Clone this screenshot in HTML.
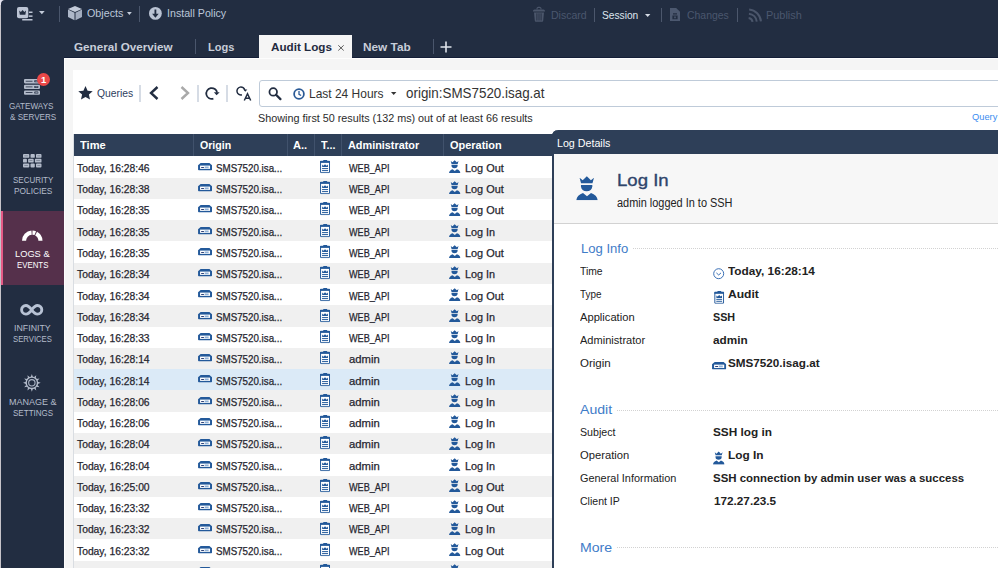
<!DOCTYPE html>
<html>
<head>
<meta charset="utf-8">
<title>SmartConsole - Audit Logs</title>
<style>
*{box-sizing:border-box;margin:0;padding:0}
html,body{width:998px;height:568px;overflow:hidden}
body{position:relative;background:#222d41;font-family:"Liberation Sans",sans-serif;color:#222;font-size:11px}
.abs{position:absolute}
.t{position:absolute;white-space:nowrap;line-height:1;transform-origin:0 0}
svg{position:absolute;overflow:visible}
#top{left:0;top:0;width:998px;height:58px;background:#222d41}
.vsep{position:absolute;width:1px;background:#4a566c}
#tabact{left:259px;top:35px;width:92.5px;height:24px;background:#f5f5f5}
#side{left:0;top:58px;width:64px;height:510px;background:#222d41}
#navact{left:1px;top:211px;width:63px;height:74px;background:#55304b;border-left:2px solid #e45a86}
#content{left:64px;top:58px;width:935px;height:510px;background:#f5f5f5}
#white{left:73px;top:70px;width:925px;height:498px;background:#fff}
#search{left:258.5px;top:79.5px;width:760px;height:27.5px;border:1px solid #bfcbd9;border-radius:3px;background:#fff}
#thead{left:73.8px;top:134.3px;width:479px;height:21.5px;background:#2e3f58}
.hsep{top:134.3px;width:1px;height:21.6px;background:#41526c}
.row{position:absolute;left:74px;width:478px;height:21.27px}
.row.alt{background:#f0f0f0}
.row.sel{background:#dbeaf7}
.c{position:absolute;line-height:1;white-space:nowrap;font-size:10.5px;color:#26262f;-webkit-text-stroke:.25px #26262f;transform-origin:0 0}
.ic{top:4px}
.icgw{left:123.9px;top:6.4px;width:14.1px;height:7.4px}
.icaud{left:246px;top:3.5px;width:10.1px;height:13.2px}
.icusr{left:374.5px;top:3.7px;width:11.5px;height:13px}
#dlg{left:552px;top:130px;width:460px;height:450px;background:#fff;border:0 solid #2e3f58;border-left-width:2px;border-top-left-radius:6px}
#dlgtitle{left:552px;top:130px;width:460px;height:24px;background:#2e3f58;border-top-left-radius:6px}
#dlghead{left:554px;top:154px;width:444px;height:70px;background:#f7f7f7;border-bottom:1px solid #d2d2d2}
.dots{position:absolute;height:1px;right:0;background:repeating-linear-gradient(90deg,#d2d2d2 0 1px,transparent 1px 2px)}

</style>
</head>
<body>
<svg width="0" height="0" style="position:absolute">
<defs>
<symbol id="i-gw" viewBox="0 0 14 7.4">
  <path d="M2.6 0h8.800l2.600 2.300v4.300a.8.800 0 0 1-.8.800H.8a.8.800 0 0 1-.8-.8V2.300z" fill="#23599a"/>
  <rect x="2" y="2.600" width="10" height="3.300" fill="#fff"/>
  <rect x="3.100" y="4" width="2.800" height=".9" fill="#1a2f6a"/>
  <rect x="6.600" y="3.500" width="4" height="1.700" fill="#8fb0d6"/>
</symbol>
<symbol id="i-aud" viewBox="0 0 10 13.200">
  <rect x="3.100" y="0" width="4.100" height="1.500" rx=".5" fill="#23599a"/>
  <rect x=".5" y="1.400" width="9" height="11.300" rx=".3" fill="#fff" stroke="#23599a" stroke-width="1"/>
  <rect x="0" y=".9" width="10" height="2" fill="#23599a"/>
  <path d="M2.100 4.600l1.300 1.100L5 4.200l1.600 1.500 1.300-1.100v2.500H2.100z" fill="#23599a"/>
  <rect x="2" y="8.100" width="6" height="1" fill="#23599a"/>
  <rect x="2" y="10.100" width="6" height="1" fill="#23599a"/>
</symbol>
<symbol id="i-usr" viewBox="0 0 23 26">
  <path d="M3.500 2l3.400 2.600L11.300.3l4.400 4.300L19 2l-1.600 5.800H5.100z" fill="#23599a"/>
  <path d="M5 9.700h12.200v1.400a6.100 5.400 0 0 1-12.200 0z" fill="#23599a"/>
  <path d="M0 26c.5-3.800 3-6.200 7.200-7.600l4.300 3.400 4.300-3.400c4.200 1.400 6.700 3.800 7.200 7.600z" fill="#23599a"/>
</symbol>
</defs>
</svg>
<div id="top" class="abs"></div>
<div id="side" class="abs"></div>
<div class="abs" style="left:0;top:0;width:1px;height:568px;background:#c6c3c9"></div>
<svg style="left:0;top:0;width:5px;height:5px" viewBox="0 0 5 5"><path d="M0 0h5A4 4 0 0 0 1 4.500V5H0z" fill="#e4e2ee"/></svg>

<!-- top toolbar -->
<svg style="left:17px;top:6.500px;width:16px;height:14px" viewBox="0 0 16 14">
  <rect x="0" y="0" width="11.300" height="11.200" rx="2" fill="#bcc4d4"/>
  <path d="M2.200 3.400l1.700 1.500 1.700-1.900 1.700 1.900 1.700-1.500-.6 4.400H2.800z" fill="#222d41"/>
  <rect x="11.900" y="4.500" width="3.600" height="1.500" fill="#bcc4d4"/>
  <rect x="11.900" y="8.400" width="3.600" height="1.500" fill="#bcc4d4"/>
  <rect x="5.200" y="12" width="10.300" height="1.500" fill="#bcc4d4"/>
</svg>
<svg style="left:39.1px;top:10.8px;width:5.7px;height:3.3px" viewBox="0 0 5.7 3.3"><path d="M0 0h5.7L2.85 3.3z" fill="#c3cbd9"/></svg>
<div class="vsep" style="left:59px;top:6px;height:16px"></div>
<svg style="left:68.200px;top:6.300px;width:14px;height:14.200px" viewBox="0 0 14 14.200">
  <path d="M7 0L14 2.900 7 6.100 0 2.900z" fill="#c3cbd9"/>
  <path d="M0 3.600l6.500 3.100v7.500L0 11.100z" fill="#aeb8c9"/>
  <path d="M14 3.600L7.500 6.700v7.500l6.500-3.100z" fill="#a3adbf"/>
</svg>
<svg style="left:126.7px;top:11.9px;width:4.8px;height:3px" viewBox="0 0 4.8 3"><path d="M0 0h4.8L2.4 3z" fill="#c3cbd9"/></svg>
<div class="vsep" style="left:139px;top:6px;height:16px"></div>
<svg style="left:149px;top:6.700px;width:12.800px;height:12.800px" viewBox="0 0 12.800 12.800">
  <circle cx="6.400" cy="6.400" r="6.400" fill="#bac3d3"/>
  <path d="M5.500 2.500h1.800v4.300h2.400L6.400 10.800 3.100 6.800h2.400z" fill="#222d41"/>
</svg>

<svg style="left:532.900px;top:7.200px;width:12px;height:14.800px" viewBox="0 0 12 14.800">
  <path d="M4 2.600V1.700A1.300 1.300 0 0 1 5.300.4h1.400A1.300 1.300 0 0 1 8 1.700v.9" fill="none" stroke="#4b566b" stroke-width="1.100"/>
  <path d="M0 4.100A1.500 1.500 0 0 1 1.500 2.600h9A1.500 1.500 0 0 1 12 4.100v.5H0z" fill="#4b566b"/>
  <path d="M1 5.400h10l-.8 8.400a1 1 0 0 1-1 .9H2.800a1 1 0 0 1-1-.9z" fill="#4b566b"/>
  <path d="M3.900 6.300v7.200M6 6.300v7.200M8.100 6.300v7.200" stroke="#222d41" stroke-width=".9"/>
</svg>
<div class="vsep" style="left:594px;top:8px;height:14px;background:#4c576c"></div>
<svg style="left:645.3px;top:13.5px;width:5.4px;height:3px" viewBox="0 0 5.4 3"><path d="M0 0h5.4L2.7 3z" fill="#d5dbe5"/></svg>
<div class="vsep" style="left:661px;top:8px;height:14px;background:#4c576c"></div>
<svg style="left:670px;top:8px;width:10px;height:13px" viewBox="0 0 10 13">
  <path d="M0 0h6.2L10 3.8V13H0z" fill="#4c586f"/>
  <path d="M3 5.2h4v1.2H3zM2.4 7.6h5.2v3.6H2.4z" fill="#222d41"/>
  <path d="M4.2 8.6h1.6v1.6H4.2z" fill="#4c586f"/>
</svg>
<div class="vsep" style="left:737px;top:8px;height:14px;background:#4c576c"></div>
<svg style="left:747.200px;top:8.400px;width:15px;height:15px" viewBox="0 0 15 15">
  <path d="M1.64 9.94A4.6 4.6 0 0 1 5.56 13.86M1.92 5.75A8.8 8.8 0 0 1 9.75 13.58M2.13 1.55A13 13 0 0 1 13.95 13.37" fill="none" stroke="#4b566b" stroke-width="2"/>
</svg>

<!-- tabs -->
<div class="vsep" style="left:195px;top:39px;height:15px"></div>
<div id="tabact" class="abs"></div>
<svg style="left:338.300px;top:45.300px;width:6px;height:5.800px" viewBox="0 0 6 5.800"><path d="M.3.300l5.400 5.200M5.700.3L.3 5.500" stroke="#4a4a4a" stroke-width=".9"/></svg>
<div class="vsep" style="left:433px;top:39px;height:15px"></div>
<svg style="left:440px;top:41px;width:12px;height:12px" viewBox="0 0 12 12"><path d="M6 0.5v11M0.5 6h11" stroke="#dfe3ea" stroke-width="1.6"/></svg>

<!-- sidebar -->
<div id="navact" class="abs"></div>
<svg style="left:24px;top:79.400px;width:16px;height:15.800px" viewBox="0 0 16 15.800">
  <g fill="#b4bccb"><rect x="0" y="0" width="16" height="4.400" rx="1.100"/><rect x="0" y="5.700" width="16" height="4.400" rx="1.100"/><rect x="0" y="11.400" width="16" height="4.400" rx="1.100"/></g>
  <g fill="#222d41"><rect x="1.700" y="1.800" width="6.800" height=".8"/><rect x="1.700" y="7.500" width="6.800" height=".8"/><rect x="1.700" y="13.200" width="6.800" height=".8"/>
  <rect x="10.300" y="1.200" width="4" height="2" rx=".4"/><rect x="10.300" y="6.900" width="4" height="2" rx=".4"/><rect x="10.300" y="12.600" width="4" height="2" rx=".4"/></g>
  <g fill="#8d97aa"><rect x="11.300" y="1.700" width="2.400" height="1"/><rect x="11.300" y="7.400" width="2.400" height="1"/><rect x="11.300" y="13.100" width="2.400" height="1"/></g>
</svg>
<div class="abs" style="left:37.200px;top:73px;width:13px;height:13px;border-radius:6.500px;background:#ea4848"></div>
<span class="t" style="left:41.100px;top:75px;color:#fff;font-size:9.500px;font-weight:bold">1</span>

<svg style="left:22.700px;top:154.300px;width:18.500px;height:13.400px" viewBox="0 0 18.500 13.400">
  <g fill="#b4bccb">
  <rect x="0" y="0" width="6.300" height="3.800" rx=".9"/><rect x="7.500" y="0" width="4.300" height="3.800" rx=".9"/><rect x="13" y="0" width="5.500" height="3.800" rx=".9"/>
  <rect x="0" y="4.800" width="3.900" height="3.800" rx=".9"/><rect x="5.100" y="4.800" width="5.600" height="3.800" rx=".9"/><rect x="11.900" y="4.800" width="6.600" height="3.800" rx=".9"/>
  <rect x="0" y="9.600" width="6.300" height="3.800" rx=".9"/><rect x="7.500" y="9.600" width="4.300" height="3.800" rx=".9"/><rect x="13" y="9.600" width="5.500" height="3.800" rx=".9"/>
  </g>
  <g fill="#222d41" opacity=".55"><rect x="1.300" y="1.600" width="3.600" height=".6"/><rect x="14.300" y="1.600" width="3" height=".6"/><rect x="6.400" y="6.400" width="3" height=".6"/><rect x="13.200" y="6.400" width="4" height=".6"/><rect x="1.300" y="11.200" width="3.600" height=".6"/><rect x="14.300" y="11.200" width="3" height=".6"/></g>
</svg>

<svg style="left:21.700px;top:230.100px;width:20.500px;height:10.800px" viewBox="0 0 20.500 10.800">
  <path d="M2.050 10.800A8.200 8.200 0 0 1 18.450 10.800" fill="none" stroke="#fff" stroke-width="4.100" stroke-dasharray="12.100 .9 2.900 .9 9.200"/>
</svg>

<svg style="left:19.900px;top:304.100px;width:23.400px;height:11.600px" viewBox="0 0 23.400 11.600">
  <path d="M11.700 5.800C9.400 2.700 7.900 1.500 5.900 1.500a4.300 4.300 0 0 0 0 8.600C7.900 10.100 9.400 8.900 11.700 5.800S15.500 1.500 17.500 1.500a4.300 4.300 0 0 1 0 8.600C15.500 10.100 14 8.900 11.700 5.800z" fill="none" stroke="#b8c2d4" stroke-width="2.900" stroke-linejoin="round"/>
</svg>

<svg style="left:22.700px;top:374.200px;width:17.700px;height:17.700px" viewBox="0 0 17.700 17.700">
  <path d="M7.81 2.94L8.85 0.00L9.89 2.94zM10.90 3.21L13.28 1.19L12.71 4.25zM13.45 4.99L16.51 4.43L14.49 6.80zM14.76 7.81L17.70 8.85L14.76 9.89zM14.49 10.90L16.51 13.27L13.45 12.71zM12.71 13.45L13.28 16.51L10.90 14.49zM9.89 14.76L8.85 17.70L7.81 14.76zM6.80 14.49L4.43 16.51L4.99 13.45zM4.25 12.71L1.19 13.27L3.21 10.90zM2.94 9.89L0.00 8.85L2.94 7.81zM3.21 6.80L1.19 4.42L4.25 4.99zM4.99 4.25L4.42 1.19L6.80 3.21z" fill="#b4bccb"/>
  <circle cx="8.850" cy="8.850" r="5.700" fill="none" stroke="#b4bccb" stroke-width="1.400"/>
  <circle cx="8.850" cy="8.850" r="3.200" fill="none" stroke="#aab3c4" stroke-width="1.100"/>
</svg>

<!-- content -->
<div id="content" class="abs"></div>
<div class="abs" style="left:64px;top:57px;width:195px;height:1px;background:#141e37"></div>
<div class="abs" style="left:352px;top:57px;width:646px;height:1px;background:#141e37"></div>
<div class="abs" style="left:64px;top:58px;width:934px;height:1px;background:#fdfdfd"></div>
<div class="abs" style="left:64px;top:58px;width:1px;height:510px;background:#fdfdfd"></div>
<div id="white" class="abs"></div>

<div class="abs" style="left:73px;top:134px;width:1px;height:434px;background:#d9dde2"></div>
<!-- query bar -->
<svg style="left:78px;top:86px;width:15px;height:14px" viewBox="0 0 15 14"><path d="M7.5 0l2.100 4.700 5.100.500-3.800 3.400 1.100 5-4.500-2.600L3 13.600l1.100-5L0.300 5.200l5.100-.5z" fill="#222d41"/></svg>
<div class="abs" style="left:139px;top:85px;width:2px;height:16.500px;background:#d6dce5"></div>
<svg style="left:149px;top:86px;width:10px;height:14px" viewBox="0 0 10 14"><path d="M8.500 1L2 7l6.500 6" fill="none" stroke="#222d41" stroke-width="2.400"/></svg>
<svg style="left:180px;top:86px;width:10px;height:14px" viewBox="0 0 10 14"><path d="M1.500 1L8 7l-6.500 6" fill="none" stroke="#a9a9a9" stroke-width="2.400"/></svg>
<div class="abs" style="left:197px;top:85px;width:2px;height:16.500px;background:#d6dce5"></div>
<svg style="left:205.300px;top:86.800px;width:15px;height:13px" viewBox="0 0 15 13">
  <path d="M8.38 11.68A5.45 5.45 0 1 1 12.10 5.74" fill="none" stroke="#222d41" stroke-width="1.750"/>
  <path d="M8.900 5.300h5.800l-3.100 3z" fill="#222d41"/>
</svg>
<div class="abs" style="left:226px;top:85px;width:2px;height:16.500px;background:#d6dce5"></div>
<svg style="left:235.500px;top:86px;width:15.500px;height:14.600px" viewBox="0 0 15.500 14.600">
  <path d="M5.92 8.82A3.95 3.95 0 1 1 8.79 4.31" fill="none" stroke="#222d41" stroke-width="1.500"/>
  <path d="M7.500 3.400h3.800l-2 2.300z" fill="#222d41"/>
  <path d="M8.300 14.500l3.200-6.700 3.200 6.700M9.500 12.300h4" fill="none" stroke="#222d41" stroke-width="1.500"/>
</svg>
<div id="search" class="abs"></div>
<svg style="left:267.500px;top:86.700px;width:13.800px;height:13.200px" viewBox="0 0 15 15">
  <circle cx="5.600" cy="5.600" r="4.300" fill="none" stroke="#222d41" stroke-width="2"/>
  <path d="M8.800 8.800l5 5" stroke="#222d41" stroke-width="2.600" stroke-linecap="round"/>
</svg>
<svg style="left:292.600px;top:88.200px;width:12px;height:12px" viewBox="0 0 13 13">
  <circle cx="6.500" cy="6.500" r="5.300" fill="none" stroke="#2b5a96" stroke-width="1.900"/>
  <path d="M6.500 3.300v3.500l2.300 1.300" fill="none" stroke="#2b5a96" stroke-width="1.400"/>
</svg>
<svg style="left:390.9px;top:91.5px;width:5.4px;height:3px" viewBox="0 0 5.4 3"><path d="M0 0h5.4L2.7 3z" fill="#333"/></svg>

<!-- table header -->
<div id="thead" class="abs"></div>
<div class="abs hsep" style="left:193px"></div>
<div class="abs hsep" style="left:287px"></div>
<div class="abs hsep" style="left:314px"></div>
<div class="abs hsep" style="left:341px"></div>
<div class="abs hsep" style="left:443px"></div>
<!-- table rows -->
<div class="row" style="top:156.4px"><span class="c" style="left:2.8px;top:6.6px;transform:scaleX(0.9817)">Today, 16:28:46</span><svg class="ic icgw"><use href="#i-gw"/></svg><span class="c" style="left:141.7px;top:6.6px;transform:scaleX(0.9297)">SMS7520.isa...</span><svg class="ic icaud"><use href="#i-aud"/></svg><span class="c" style="left:274.9px;top:6.6px;transform:scaleX(0.8675)">WEB_API</span><svg class="ic icusr"><use href="#i-usr"/></svg><span class="c" style="left:391.3px;top:6.6px;transform:scaleX(1.0381)">Log Out</span></div>
<div class="row alt" style="top:177.7px"><span class="c" style="left:2.8px;top:6.3px;transform:scaleX(0.9817)">Today, 16:28:38</span><svg class="ic icgw"><use href="#i-gw"/></svg><span class="c" style="left:141.7px;top:6.3px;transform:scaleX(0.9297)">SMS7520.isa...</span><svg class="ic icaud"><use href="#i-aud"/></svg><span class="c" style="left:274.9px;top:6.3px;transform:scaleX(0.8675)">WEB_API</span><svg class="ic icusr"><use href="#i-usr"/></svg><span class="c" style="left:391.3px;top:6.3px;transform:scaleX(1.0381)">Log Out</span></div>
<div class="row" style="top:198.9px"><span class="c" style="left:2.8px;top:6.1px;transform:scaleX(0.9817)">Today, 16:28:35</span><svg class="ic icgw"><use href="#i-gw"/></svg><span class="c" style="left:141.7px;top:6.1px;transform:scaleX(0.9297)">SMS7520.isa...</span><svg class="ic icaud"><use href="#i-aud"/></svg><span class="c" style="left:274.9px;top:6.1px;transform:scaleX(0.8675)">WEB_API</span><svg class="ic icusr"><use href="#i-usr"/></svg><span class="c" style="left:391.3px;top:6.1px;transform:scaleX(1.0381)">Log Out</span></div>
<div class="row alt" style="top:220.2px"><span class="c" style="left:2.8px;top:6.8px;transform:scaleX(0.9817)">Today, 16:28:35</span><svg class="ic icgw"><use href="#i-gw"/></svg><span class="c" style="left:141.7px;top:6.8px;transform:scaleX(0.9297)">SMS7520.isa...</span><svg class="ic icaud"><use href="#i-aud"/></svg><span class="c" style="left:274.9px;top:6.8px;transform:scaleX(0.8675)">WEB_API</span><svg class="ic icusr"><use href="#i-usr"/></svg><span class="c" style="left:391.3px;top:6.8px;transform:scaleX(1.0307)">Log In</span></div>
<div class="row" style="top:241.5px"><span class="c" style="left:2.8px;top:6.5px;transform:scaleX(0.9817)">Today, 16:28:35</span><svg class="ic icgw"><use href="#i-gw"/></svg><span class="c" style="left:141.7px;top:6.5px;transform:scaleX(0.9297)">SMS7520.isa...</span><svg class="ic icaud"><use href="#i-aud"/></svg><span class="c" style="left:274.9px;top:6.5px;transform:scaleX(0.8675)">WEB_API</span><svg class="ic icusr"><use href="#i-usr"/></svg><span class="c" style="left:391.3px;top:6.5px;transform:scaleX(1.0381)">Log Out</span></div>
<div class="row alt" style="top:262.8px"><span class="c" style="left:2.8px;top:6.2px;transform:scaleX(0.9817)">Today, 16:28:34</span><svg class="ic icgw"><use href="#i-gw"/></svg><span class="c" style="left:141.7px;top:6.2px;transform:scaleX(0.9297)">SMS7520.isa...</span><svg class="ic icaud"><use href="#i-aud"/></svg><span class="c" style="left:274.9px;top:6.2px;transform:scaleX(0.8675)">WEB_API</span><svg class="ic icusr"><use href="#i-usr"/></svg><span class="c" style="left:391.3px;top:6.2px;transform:scaleX(1.0307)">Log In</span></div>
<div class="row" style="top:284.0px"><span class="c" style="left:2.8px;top:7.0px;transform:scaleX(0.9817)">Today, 16:28:34</span><svg class="ic icgw"><use href="#i-gw"/></svg><span class="c" style="left:141.7px;top:7.0px;transform:scaleX(0.9297)">SMS7520.isa...</span><svg class="ic icaud"><use href="#i-aud"/></svg><span class="c" style="left:274.9px;top:7.0px;transform:scaleX(0.8675)">WEB_API</span><svg class="ic icusr"><use href="#i-usr"/></svg><span class="c" style="left:391.3px;top:7.0px;transform:scaleX(1.0381)">Log Out</span></div>
<div class="row alt" style="top:305.3px"><span class="c" style="left:2.8px;top:6.7px;transform:scaleX(0.9817)">Today, 16:28:34</span><svg class="ic icgw"><use href="#i-gw"/></svg><span class="c" style="left:141.7px;top:6.7px;transform:scaleX(0.9297)">SMS7520.isa...</span><svg class="ic icaud"><use href="#i-aud"/></svg><span class="c" style="left:274.9px;top:6.7px;transform:scaleX(0.8675)">WEB_API</span><svg class="ic icusr"><use href="#i-usr"/></svg><span class="c" style="left:391.3px;top:6.7px;transform:scaleX(1.0307)">Log In</span></div>
<div class="row" style="top:326.6px"><span class="c" style="left:2.8px;top:6.4px;transform:scaleX(0.9817)">Today, 16:28:33</span><svg class="ic icgw"><use href="#i-gw"/></svg><span class="c" style="left:141.7px;top:6.4px;transform:scaleX(0.9297)">SMS7520.isa...</span><svg class="ic icaud"><use href="#i-aud"/></svg><span class="c" style="left:274.9px;top:6.4px;transform:scaleX(0.8675)">WEB_API</span><svg class="ic icusr"><use href="#i-usr"/></svg><span class="c" style="left:391.3px;top:6.4px;transform:scaleX(1.0307)">Log In</span></div>
<div class="row alt" style="top:347.8px"><span class="c" style="left:2.8px;top:6.2px;transform:scaleX(0.9817)">Today, 16:28:14</span><svg class="ic icgw"><use href="#i-gw"/></svg><span class="c" style="left:141.7px;top:6.2px;transform:scaleX(0.9297)">SMS7520.isa...</span><svg class="ic icaud"><use href="#i-aud"/></svg><span class="c" style="left:274.9px;top:6.2px;transform:scaleX(1.0731)">admin</span><svg class="ic icusr"><use href="#i-usr"/></svg><span class="c" style="left:391.3px;top:6.2px;transform:scaleX(1.0307)">Log In</span></div>
<div class="row sel" style="top:369.1px"><span class="c" style="left:2.8px;top:6.9px;transform:scaleX(0.9817)">Today, 16:28:14</span><svg class="ic icgw"><use href="#i-gw"/></svg><span class="c" style="left:141.7px;top:6.9px;transform:scaleX(0.9297)">SMS7520.isa...</span><svg class="ic icaud"><use href="#i-aud"/></svg><span class="c" style="left:274.9px;top:6.9px;transform:scaleX(1.0731)">admin</span><svg class="ic icusr"><use href="#i-usr"/></svg><span class="c" style="left:391.3px;top:6.9px;transform:scaleX(1.0307)">Log In</span></div>
<div class="row alt" style="top:390.4px"><span class="c" style="left:2.8px;top:6.6px;transform:scaleX(0.9817)">Today, 16:28:06</span><svg class="ic icgw"><use href="#i-gw"/></svg><span class="c" style="left:141.7px;top:6.6px;transform:scaleX(0.9297)">SMS7520.isa...</span><svg class="ic icaud"><use href="#i-aud"/></svg><span class="c" style="left:274.9px;top:6.6px;transform:scaleX(1.0731)">admin</span><svg class="ic icusr"><use href="#i-usr"/></svg><span class="c" style="left:391.3px;top:6.6px;transform:scaleX(1.0307)">Log In</span></div>
<div class="row" style="top:411.6px"><span class="c" style="left:2.8px;top:6.4px;transform:scaleX(0.9817)">Today, 16:28:06</span><svg class="ic icgw"><use href="#i-gw"/></svg><span class="c" style="left:141.7px;top:6.4px;transform:scaleX(0.9297)">SMS7520.isa...</span><svg class="ic icaud"><use href="#i-aud"/></svg><span class="c" style="left:274.9px;top:6.4px;transform:scaleX(1.0731)">admin</span><svg class="ic icusr"><use href="#i-usr"/></svg><span class="c" style="left:391.3px;top:6.4px;transform:scaleX(1.0307)">Log In</span></div>
<div class="row alt" style="top:432.9px"><span class="c" style="left:2.8px;top:6.1px;transform:scaleX(0.9817)">Today, 16:28:04</span><svg class="ic icgw"><use href="#i-gw"/></svg><span class="c" style="left:141.7px;top:6.1px;transform:scaleX(0.9297)">SMS7520.isa...</span><svg class="ic icaud"><use href="#i-aud"/></svg><span class="c" style="left:274.9px;top:6.1px;transform:scaleX(1.0731)">admin</span><svg class="ic icusr"><use href="#i-usr"/></svg><span class="c" style="left:391.3px;top:6.1px;transform:scaleX(1.0307)">Log In</span></div>
<div class="row" style="top:454.2px"><span class="c" style="left:2.8px;top:6.8px;transform:scaleX(0.9817)">Today, 16:28:04</span><svg class="ic icgw"><use href="#i-gw"/></svg><span class="c" style="left:141.7px;top:6.8px;transform:scaleX(0.9297)">SMS7520.isa...</span><svg class="ic icaud"><use href="#i-aud"/></svg><span class="c" style="left:274.9px;top:6.8px;transform:scaleX(1.0731)">admin</span><svg class="ic icusr"><use href="#i-usr"/></svg><span class="c" style="left:391.3px;top:6.8px;transform:scaleX(1.0307)">Log In</span></div>
<div class="row alt" style="top:475.5px"><span class="c" style="left:2.8px;top:6.5px;transform:scaleX(0.9817)">Today, 16:25:00</span><svg class="ic icgw"><use href="#i-gw"/></svg><span class="c" style="left:141.7px;top:6.5px;transform:scaleX(0.9297)">SMS7520.isa...</span><svg class="ic icaud"><use href="#i-aud"/></svg><span class="c" style="left:274.9px;top:6.5px;transform:scaleX(0.8675)">WEB_API</span><svg class="ic icusr"><use href="#i-usr"/></svg><span class="c" style="left:391.3px;top:6.5px;transform:scaleX(1.0381)">Log Out</span></div>
<div class="row" style="top:496.7px"><span class="c" style="left:2.8px;top:6.3px;transform:scaleX(0.9817)">Today, 16:23:32</span><svg class="ic icgw"><use href="#i-gw"/></svg><span class="c" style="left:141.7px;top:6.3px;transform:scaleX(0.9297)">SMS7520.isa...</span><svg class="ic icaud"><use href="#i-aud"/></svg><span class="c" style="left:274.9px;top:6.3px;transform:scaleX(0.8675)">WEB_API</span><svg class="ic icusr"><use href="#i-usr"/></svg><span class="c" style="left:391.3px;top:6.3px;transform:scaleX(1.0381)">Log Out</span></div>
<div class="row alt" style="top:518.0px"><span class="c" style="left:2.8px;top:6.0px;transform:scaleX(0.9817)">Today, 16:23:32</span><svg class="ic icgw"><use href="#i-gw"/></svg><span class="c" style="left:141.7px;top:6.0px;transform:scaleX(0.9297)">SMS7520.isa...</span><svg class="ic icaud"><use href="#i-aud"/></svg><span class="c" style="left:274.9px;top:6.0px;transform:scaleX(0.8675)">WEB_API</span><svg class="ic icusr"><use href="#i-usr"/></svg><span class="c" style="left:391.3px;top:6.0px;transform:scaleX(1.0307)">Log In</span></div>
<div class="row" style="top:539.3px"><span class="c" style="left:2.8px;top:6.7px;transform:scaleX(0.9817)">Today, 16:23:32</span><svg class="ic icgw"><use href="#i-gw"/></svg><span class="c" style="left:141.7px;top:6.7px;transform:scaleX(0.9297)">SMS7520.isa...</span><svg class="ic icaud"><use href="#i-aud"/></svg><span class="c" style="left:274.9px;top:6.7px;transform:scaleX(0.8675)">WEB_API</span><svg class="ic icusr"><use href="#i-usr"/></svg><span class="c" style="left:391.3px;top:6.7px;transform:scaleX(1.0381)">Log Out</span></div>
<div class="row alt" style="top:560.5px"><span class="c" style="left:2.8px;top:6.5px;transform:scaleX(0.9817)">Today, 16:23:31</span><svg class="ic icgw"><use href="#i-gw"/></svg><span class="c" style="left:141.7px;top:6.5px;transform:scaleX(0.9297)">SMS7520.isa...</span><svg class="ic icaud"><use href="#i-aud"/></svg><span class="c" style="left:274.9px;top:6.5px;transform:scaleX(0.8675)">WEB_API</span><svg class="ic icusr"><use href="#i-usr"/></svg><span class="c" style="left:391.3px;top:6.5px;transform:scaleX(1.0307)">Log In</span></div>
<!-- log details -->
<div id="dlg" class="abs"></div>
<div id="dlgtitle" class="abs"></div>
<div id="dlghead" class="abs"></div>
<svg style="left:576.3px;top:175.8px;width:22px;height:24.2px"><use href="#i-usr"/></svg>

<div class="dots" style="left:633.3px;top:248px"></div>
<svg style="left:712.8px;top:268.4px;width:11.4px;height:11.4px" viewBox="0 0 11.400 11.400"><circle cx="5.700" cy="5.700" r="5" fill="#fff" stroke="#3a6fb5" stroke-width="1"/><path d="M3.400 4.900l2.300 2.100 2.300-2.100" fill="none" stroke="#3a6fb5" stroke-width="1"/></svg>
<svg style="left:713.8px;top:290.5px;width:10.4px;height:12.8px"><use href="#i-aud"/></svg>
<svg style="left:712px;top:362.2px;width:14.3px;height:7.500px"><use href="#i-gw"/></svg>

<div class="dots" style="left:617.2px;top:410px"></div>
<svg style="left:712.8px;top:450.7px;width:11.6px;height:13.8px"><use href="#i-usr"/></svg>

<div class="dots" style="left:617.2px;top:547.2px"></div>
<!-- texts -->
<span class="t" id="t-obj" style="left:86.8px;top:8px;font-size:11.3px;color:#bcc7d9;transform:scaleX(0.9501)">Objects</span>
<span class="t" id="t-inst" style="left:167.0px;top:8px;font-size:11.3px;color:#bcc7d9;transform:scaleX(0.9427)">Install Policy</span>
<span class="t" id="t-disc" style="left:551.0px;top:10px;font-size:10.6px;color:#4b576e;transform:scaleX(0.9938)">Discard</span>
<span class="t" id="t-sess" style="left:602.1px;top:10px;font-size:10.6px;color:#dfe5ee;transform:scaleX(0.9628)">Session</span>
<span class="t" id="t-chg" style="left:687.1px;top:10px;font-size:10.6px;color:#4b576e;transform:scaleX(0.9857)">Changes</span>
<span class="t" id="t-pub" style="left:766.4px;top:10px;font-size:10.6px;color:#4b576e;transform:scaleX(1.0302)">Publish</span>
<span class="t" id="t-go" style="left:74.0px;top:42px;font-size:11.5px;color:#c8ced9;font-weight:bold;transform:scaleX(1.0147)">General Overview</span>
<span class="t" id="t-logs" style="left:207.8px;top:42px;font-size:11.5px;color:#c8ced9;font-weight:bold;transform:scaleX(0.9605)">Logs</span>
<span class="t" id="t-al" style="left:270.8px;top:42px;font-size:11.5px;color:#1f2a40;font-weight:bold;transform:scaleX(1.0142)">Audit Logs</span>
<span class="t" id="t-nt" style="left:363.4px;top:42px;font-size:11.5px;color:#c8ced9;font-weight:bold;transform:scaleX(1.0272)">New Tab</span>
<span class="t" id="n1a" style="left:8.9px;top:102px;font-size:9.2px;color:#b4bccb;transform:scaleX(0.8834)">GATEWAYS</span>
<span class="t" id="n1b" style="left:10.0px;top:113px;font-size:9.2px;color:#b4bccb;transform:scaleX(0.8810)">&amp; SERVERS</span>
<span class="t" id="n2a" style="left:12.6px;top:176px;font-size:9.2px;color:#b4bccb;transform:scaleX(0.8672)">SECURITY</span>
<span class="t" id="n2b" style="left:14.2px;top:187px;font-size:9.2px;color:#b4bccb;transform:scaleX(0.9059)">POLICIES</span>
<span class="t" id="n3a" style="left:15.1px;top:250px;font-size:9.2px;color:#fff;transform:scaleX(1.0111)">LOGS &amp;</span>
<span class="t" id="n3b" style="left:17.4px;top:261px;font-size:9.2px;color:#fff;transform:scaleX(0.8541)">EVENTS</span>
<span class="t" id="n4a" style="left:13.7px;top:324px;font-size:9.2px;color:#b4bccb;transform:scaleX(0.9587)">INFINITY</span>
<span class="t" id="n4b" style="left:12.9px;top:335px;font-size:9.2px;color:#b4bccb;transform:scaleX(0.8402)">SERVICES</span>
<span class="t" id="n5a" style="left:9.3px;top:398px;font-size:9.2px;color:#b4bccb;transform:scaleX(0.9794)">MANAGE &amp;</span>
<span class="t" id="n5b" style="left:13.4px;top:409px;font-size:9.2px;color:#b4bccb;transform:scaleX(0.8748)">SETTINGS</span>
<span class="t" id="t-q" style="left:97.0px;top:88px;font-size:11px;color:#2e4060;transform:scaleX(0.9395)">Queries</span>
<span class="t" id="t-l24" style="left:309.4px;top:88px;font-size:12.2px;color:#333;transform:scaleX(0.9819)">Last 24 Hours</span>
<span class="t" id="t-orig" style="left:405.6px;top:86px;font-size:14.5px;color:#333;transform:scaleX(0.9238)">origin:SMS7520.isag.at</span>
<span class="t" id="t-show" style="left:258.0px;top:113px;font-size:11.5px;color:#2b2b2b;transform:scaleX(0.9383)">Showing first 50 results (132 ms) out of at least 66 results</span>
<span class="t" id="t-qry" style="left:971.8px;top:112px;font-size:9.5px;color:#3b8cf0;transform:scaleX(0.9778)">Query</span>
<span class="t" id="h1" style="left:79.9px;top:140px;font-size:11.5px;color:#fff;font-weight:bold;transform:scaleX(0.9647)">Time</span>
<span class="t" id="h2" style="left:200.2px;top:140px;font-size:11.5px;color:#fff;font-weight:bold;transform:scaleX(0.9210)">Origin</span>
<span class="t" id="h3" style="left:292.7px;top:140px;font-size:11.5px;color:#fff;font-weight:bold;transform:scaleX(0.9658)">A..</span>
<span class="t" id="h4" style="left:320.7px;top:140px;font-size:11.5px;color:#fff;font-weight:bold;transform:scaleX(0.9385)">T...</span>
<span class="t" id="h5" style="left:348.2px;top:140px;font-size:11.5px;color:#fff;font-weight:bold;transform:scaleX(0.9442)">Administrator</span>
<span class="t" id="h6" style="left:450.2px;top:140px;font-size:11.5px;color:#fff;font-weight:bold;transform:scaleX(0.9519)">Operation</span>
<span class="t" id="t-ld" style="left:557.2px;top:138px;font-size:11.8px;color:#fff;transform:scaleX(0.9046)">Log Details</span>
<span class="t" id="t-li" style="left:617.2px;top:173px;font-size:16.8px;color:#2f456b;-webkit-text-stroke:.35px #2f456b;transform:scaleX(1.1077)">Log In</span>
<span class="t" id="t-sub" style="left:616.9px;top:197px;font-size:12px;color:#222;transform:scaleX(0.9112)">admin logged In to SSH</span>
<span class="t" id="s1" style="left:580.6px;top:242px;font-size:13px;color:#3f7cc8;transform:scaleX(1.0064)">Log Info</span>
<span class="t" id="l1" style="left:579.8px;top:266px;font-size:11px;color:#222;transform:scaleX(0.9398)">Time</span>
<span class="t" id="l2" style="left:579.8px;top:289px;font-size:11px;color:#222;transform:scaleX(0.9011)">Type</span>
<span class="t" id="l3" style="left:579.8px;top:312px;font-size:11px;color:#222;transform:scaleX(1.0143)">Application</span>
<span class="t" id="l4" style="left:579.8px;top:335px;font-size:11px;color:#222;transform:scaleX(1.0047)">Administrator</span>
<span class="t" id="l5" style="left:579.8px;top:358px;font-size:11px;color:#222;transform:scaleX(1.0462)">Origin</span>
<span class="t" id="v1" style="left:727.8px;top:266px;font-size:10.5px;color:#222;font-weight:bold;transform:scaleX(1.1251)">Today, 16:28:14</span>
<span class="t" id="v2" style="left:727.8px;top:289px;font-size:10.5px;color:#222;font-weight:bold;transform:scaleX(1.1518)">Audit</span>
<span class="t" id="v3" style="left:713.2px;top:312px;font-size:10.5px;color:#222;font-weight:bold;transform:scaleX(1.0234)">SSH</span>
<span class="t" id="v4" style="left:713.2px;top:335px;font-size:10.5px;color:#222;font-weight:bold;transform:scaleX(1.1189)">admin</span>
<span class="t" id="v5" style="left:727.8px;top:358px;font-size:10.5px;color:#222;font-weight:bold;transform:scaleX(1.1130)">SMS7520.isag.at</span>
<span class="t" id="s2" style="left:580.1px;top:403px;font-size:13px;color:#3f7cc8;transform:scaleX(1.0830)">Audit</span>
<span class="t" id="l6" style="left:580.1px;top:427px;font-size:11px;color:#222;transform:scaleX(0.9672)">Subject</span>
<span class="t" id="l7" style="left:580.1px;top:450px;font-size:11px;color:#222;transform:scaleX(1.0184)">Operation</span>
<span class="t" id="l8" style="left:580.1px;top:473px;font-size:11px;color:#222;transform:scaleX(0.9916)">General Information</span>
<span class="t" id="l9" style="left:580.1px;top:496px;font-size:11px;color:#222;transform:scaleX(0.9572)">Client IP</span>
<span class="t" id="v6" style="left:713.1px;top:427px;font-size:10.5px;color:#222;font-weight:bold;transform:scaleX(1.1238)">SSH log in</span>
<span class="t" id="v7" style="left:728.1px;top:450px;font-size:10.5px;color:#222;font-weight:bold;transform:scaleX(1.1270)">Log In</span>
<span class="t" id="v8" style="left:713.1px;top:473px;font-size:10.5px;color:#222;font-weight:bold;transform:scaleX(1.0897)">SSH connection by admin user was a success</span>
<span class="t" id="v9" style="left:714.4px;top:496px;font-size:10.5px;color:#222;font-weight:bold;transform:scaleX(1.1177)">172.27.23.5</span>
<span class="t" id="s3" style="left:580.1px;top:541px;font-size:13px;color:#3f7cc8;transform:scaleX(1.0835)">More</span>
</body>
</html>
